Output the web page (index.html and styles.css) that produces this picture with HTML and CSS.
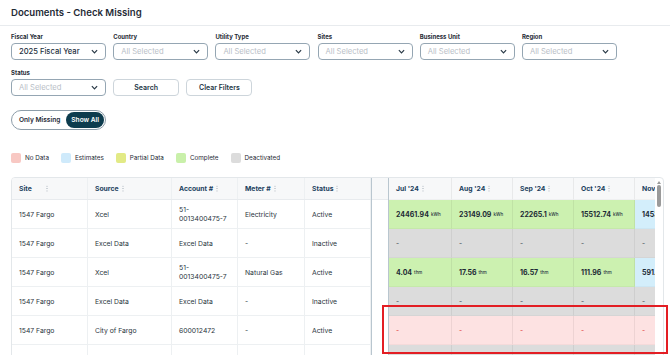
FILE: index.html
```html
<!DOCTYPE html>
<html lang="en">
<head>
    <meta charset="UTF-8">
    <meta name="viewport" content="width=device-width, initial-scale=1.0">
    <title>Documents - Check Missing</title>
    <link rel="stylesheet" href="styles.css">
</head>
<body>
    <header class="page-head">
        <h1>Documents - Check Missing</h1>
    </header>

    <div class="content">
        <!-- Filters -->
        <div class="filters">
            <div class="field">
                <label>Fiscal Year</label>
                <div class="select filled">2025 Fiscal Year <svg viewBox="0 0 8 5"><path d="M1 1l3 3 3-3"/></svg></div>
            </div>
            <div class="field">
                <label>Country</label>
                <div class="select">All Selected <svg viewBox="0 0 8 5"><path d="M1 1l3 3 3-3"/></svg></div>
            </div>
            <div class="field">
                <label>Utility Type</label>
                <div class="select">All Selected <svg viewBox="0 0 8 5"><path d="M1 1l3 3 3-3"/></svg></div>
            </div>
            <div class="field">
                <label>Sites</label>
                <div class="select">All Selected <svg viewBox="0 0 8 5"><path d="M1 1l3 3 3-3"/></svg></div>
            </div>
            <div class="field">
                <label>Business Unit</label>
                <div class="select">All Selected <svg viewBox="0 0 8 5"><path d="M1 1l3 3 3-3"/></svg></div>
            </div>
            <div class="field">
                <label>Region</label>
                <div class="select">All Selected <svg viewBox="0 0 8 5"><path d="M1 1l3 3 3-3"/></svg></div>
            </div>
        </div>

        <div class="filters">
            <div class="field">
                <label>Status</label>
                <div class="select">All Selected <svg viewBox="0 0 8 5"><path d="M1 1l3 3 3-3"/></svg></div>
            </div>
            <button class="btn">Search</button>
            <button class="btn">Clear Filters</button>
        </div>

        <div class="toggle">
            <span class="opt">Only Missing</span>
            <span class="opt on">Show All</span>
        </div>

        <!-- Legend -->
        <div class="legend">
            <div class="legend-item"><span class="swatch sw-none"></span>No Data</div>
            <div class="legend-item"><span class="swatch sw-est"></span>Estimates</div>
            <div class="legend-item"><span class="swatch sw-partial"></span>Partial Data</div>
            <div class="legend-item"><span class="swatch sw-complete"></span>Complete</div>
            <div class="legend-item"><span class="swatch sw-off"></span>Deactivated</div>
        </div>

        <!-- Data grid -->
        <div class="grid">
            <div class="pane pane-left">
                <div class="row head">
                    <div class="cell">Site <i class="dots wide"></i></div>
                    <div class="cell">Source <i class="dots"></i></div>
                    <div class="cell">Account # <i class="dots"></i></div>
                    <div class="cell">Meter # <i class="dots"></i></div>
                    <div class="cell">Status <i class="dots"></i></div>
                </div>
                <div class="row">
                    <div class="cell">1547 Fargo</div>
                    <div class="cell">Xcel</div>
                    <div class="cell">51-<br>0013400475-7</div>
                    <div class="cell">Electricity</div>
                    <div class="cell">Active</div>
                </div>
                <div class="row">
                    <div class="cell">1547 Fargo</div>
                    <div class="cell">Excel Data</div>
                    <div class="cell">Excel Data</div>
                    <div class="cell">-</div>
                    <div class="cell">Inactive</div>
                </div>
                <div class="row">
                    <div class="cell">1547 Fargo</div>
                    <div class="cell">Xcel</div>
                    <div class="cell">51-<br>0013400475-7</div>
                    <div class="cell">Natural Gas</div>
                    <div class="cell">Active</div>
                </div>
                <div class="row">
                    <div class="cell">1547 Fargo</div>
                    <div class="cell">Excel Data</div>
                    <div class="cell">Excel Data</div>
                    <div class="cell">-</div>
                    <div class="cell">Inactive</div>
                </div>
                <div class="row">
                    <div class="cell">1547 Fargo</div>
                    <div class="cell">City of Fargo</div>
                    <div class="cell">600012472</div>
                    <div class="cell">-</div>
                    <div class="cell">Active</div>
                </div>
                <div class="row">
                    <div class="cell"></div>
                    <div class="cell"></div>
                    <div class="cell"></div>
                    <div class="cell"></div>
                    <div class="cell"></div>
                </div>
            </div>

            <div class="pane pane-gap">
                <div class="row head"></div>
            </div>

            <div class="pane pane-center">
                <div class="row head">
                    <div class="cell">Jul '24 <i class="dots"></i></div>
                    <div class="cell">Aug '24 <i class="dots"></i></div>
                    <div class="cell">Sep '24 <i class="dots"></i></div>
                    <div class="cell">Oct '24 <i class="dots"></i></div>
                    <div class="cell">Nov '24 <i class="dots"></i></div>
                </div>
                <div class="row">
                    <div class="cell complete"><b>24461.94</b><small>kWh</small></div>
                    <div class="cell complete"><b>23149.09</b><small>kWh</small></div>
                    <div class="cell complete"><b>22265.1</b><small>kWh</small></div>
                    <div class="cell complete"><b>15512.74</b><small>kWh</small></div>
                    <div class="cell estimate"><b>14531.2</b><small>kWh</small></div>
                </div>
                <div class="row">
                    <div class="cell off">-</div>
                    <div class="cell off">-</div>
                    <div class="cell off">-</div>
                    <div class="cell off">-</div>
                    <div class="cell off">-</div>
                </div>
                <div class="row">
                    <div class="cell complete"><b>4.04</b><small>thm</small></div>
                    <div class="cell complete"><b>17.56</b><small>thm</small></div>
                    <div class="cell complete"><b>16.57</b><small>thm</small></div>
                    <div class="cell complete"><b>111.96</b><small>thm</small></div>
                    <div class="cell estimate"><b>591.2</b><small>thm</small></div>
                </div>
                <div class="row">
                    <div class="cell off">-</div>
                    <div class="cell off">-</div>
                    <div class="cell off">-</div>
                    <div class="cell off">-</div>
                    <div class="cell off">-</div>
                </div>
                <div class="row">
                    <div class="cell none">-</div>
                    <div class="cell none">-</div>
                    <div class="cell none">-</div>
                    <div class="cell none">-</div>
                    <div class="cell none">-</div>
                </div>
                <div class="row">
                    <div class="cell off"></div>
                    <div class="cell off"></div>
                    <div class="cell off"></div>
                    <div class="cell off"></div>
                    <div class="cell off"></div>
                </div>
            </div>

            <div class="pane pane-scroll">
                <span class="scroll-up"></span>
                <span class="scroll-thumb"></span>
            </div>
        </div>
    </div>

    <!-- highlight box drawn over the grid -->
    <div class="highlight"></div>
</body>
</html>
```

FILE: styles.css
```css
/* Base */
* {
    margin: 0;
    padding: 0;
    box-sizing: border-box;
}

html, body {
    overflow: hidden;
}

body {
    font-family: Inter, "Noto Sans", sans-serif;
    color: #1f2b36;
    background: #fff;
    width: 670px;
    height: 355px;
    position: relative;
}

.page-head {
    height: 26px;
    padding: 0 11px;
    display: flex;
    align-items: center;
    border-bottom: 1px solid #e8ebee;
}

.page-head h1 {
    font-size: 9.6px;
    font-weight: 600;
    color: #1f2b36;
}

.content {
    padding: 6px 11px 0;
}

/* Filters */
.filters {
    display: flex;
    gap: 7.2px;
    align-items: flex-end;
}

.filters + .filters {
    margin-top: 8px;
}

.field {
    width: 95px;
    display: flex;
    flex-direction: column;
    gap: 2px;
}

.field label {
    font-size: 6px;
    font-weight: 700;
    line-height: 9px;
    color: #1f2b36;
}

.select {
    height: 17px;
    border: 1px solid #95a6b3;
    border-radius: 4px;
    padding: 0 7px;
    display: flex;
    align-items: center;
    justify-content: space-between;
    font-size: 7.6px;
    color: #b9c0c7;
}

.select.filled {
    color: #1d2f3e;
    font-weight: 500;
}

.select svg {
    width: 7px;
    height: 5px;
    fill: none;
    stroke: #2a3a47;
    stroke-width: 1.4;
}

.btn {
    width: 66px;
    height: 17px;
    border: 1px solid #cdd5db;
    border-radius: 4px;
    background: #fff;
    font-family: inherit;
    font-size: 7px;
    font-weight: 600;
    color: #233645;
}

/* Toggle */
.toggle {
    margin-top: 14px;
    width: 95px;
    height: 20px;
    padding: 0 1px 0 7px;
    border: 1px solid #8d9da9;
    border-radius: 10px;
    display: flex;
    align-items: center;
    justify-content: space-between;
}

.toggle .opt {
    font-size: 6.6px;
    font-weight: 600;
    white-space: nowrap;
    color: #1f2b36;
}

.toggle .on {
    height: 16px;
    padding: 0 5px;
    border-radius: 8px;
    background: #0d3c4e;
    color: #fff;
    display: flex;
    align-items: center;
}

/* Legend */
.legend {
    margin-top: 23px;
    display: flex;
    gap: 12px;
}

.legend-item {
    display: flex;
    align-items: center;
    gap: 4px;
    font-size: 6.3px;
    color: #1f2b36;
}

.swatch {
    width: 10px;
    height: 10px;
    border-radius: 2px;
}

.sw-none { background: #f8c8c3; }
.sw-est { background: #cfeafb; }
.sw-partial { background: #e2ea86; }
.sw-complete { background: #c9f0aa; }
.sw-off { background: #dcdcdc; }

/* Grid */
.grid {
    margin-top: 14px;
    width: 653px;
    height: 200px;
    border: 1px solid #e3e7ea;
    border-radius: 4px 4px 0 0;
    display: flex;
    overflow: hidden;
}

.pane {
    display: flex;
    flex-direction: column;
}

.pane-left {
    width: 360px;
    border-right: 1px solid #b9c6cf;
}

.pane-gap {
    width: 17px;
    border-right: 1px solid #b9c6cf;
}

.pane-center {
    width: 266px;
    overflow: hidden;
}

.pane-scroll {
    width: 8px;
    padding-top: 3px;
    align-items: center;
    gap: 1px;
}

.row {
    display: grid;
    height: 29px;
    border-bottom: 1px solid #edf0f2;
}

.row.head {
    height: 22px;
    background: #f7f8f9;
    border-bottom: 1px solid #e8ebee;
}

.pane-left .row {
    grid-template-columns: 76px 84px 66px 67px 66px;
}

.pane-center .row {
    grid-template-columns: 63px 61px 61px 61px 62px;
    width: 308px;
    border-bottom: none;
}

.cell {
    display: flex;
    align-items: center;
    padding: 0 7px;
    font-size: 6.8px;
    line-height: 9px;
    color: #2a3540;
    border-right: 1px solid #edf0f2;
    white-space: nowrap;
}

.pane-left .cell:nth-child(3) {
    white-space: normal;
}

.head .cell {
    font-weight: 700;
    color: #21405d;
    gap: 3px;
}

.dots {
    width: 2px;
    height: 7px;
    background: radial-gradient(circle, #c7cdd3 0.7px, transparent 0.9px) 0 0 / 2px 2.4px repeat-y;
}

.dots.wide {
    margin-left: 11px;
}

/* Month cells */
.pane-center .cell {
    border-right: 1px solid rgba(0, 0, 0, 0.06);
    border-bottom: 1px solid rgba(0, 0, 0, 0.03);
}

.pane-center .cell b {
    font-size: 7px;
    font-weight: 700;
    color: #1d2a35;
}

.pane-center .cell small {
    font-size: 4.5px;
    font-weight: 500;
    margin-left: 2px;
    color: #2a3540;
}

.cell.complete { background: #ccf1b0; }
.cell.estimate { background: #d3eefb; }
.cell.off { background: #dcdcdc; color: #3a444c; }
.cell.none { background: #fde2e2; color: #e0302f; }

/* Scrollbar */
.scroll-up {
    width: 0;
    height: 0;
    border-left: 2px solid transparent;
    border-right: 2px solid transparent;
    border-bottom: 3px solid #9a9a9a;
}

.scroll-thumb {
    width: 4px;
    height: 22px;
    border-radius: 2px;
    background: #9a9a9a;
}

/* Annotation overlay */
.highlight {
    position: absolute;
    left: 382px;
    top: 305px;
    width: 286px;
    height: 49px;
    border: 2px solid #e31e24;
}
```
